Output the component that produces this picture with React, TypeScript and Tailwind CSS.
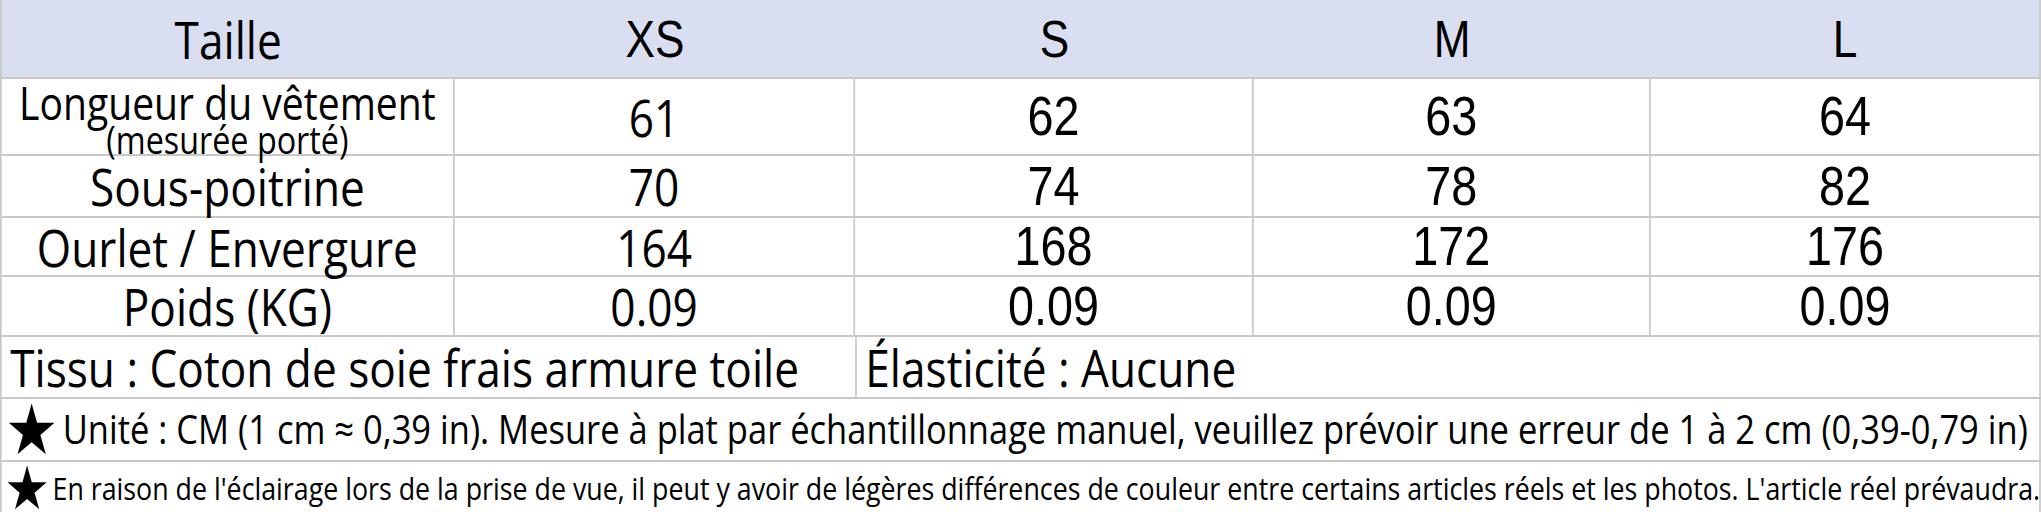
import React from 'react';

const OPEN = "font-['Open_Sans',sans-serif]";
const ARIAL = "font-['Liberation_Sans',Arial,sans-serif]";
const STAR = "font-['DejaVu_Sans',sans-serif]";

interface SizeRow {
  label: React.ReactNode;
  values: string[];
  height: string;
}

const sizeRows: SizeRow[] = [
  {
    label: (
      <div className="flex flex-col items-center leading-none">
        <span className="text-[46px] leading-[44px]">Longueur du vêtement</span>
        <span className="text-[38px] leading-[30px]">(mesurée porté)</span>
      </div>
    ),
    values: ['61', '62', '63', '64'],
    height: 'h-[77px]',
  },
  { label: 'Sous-poitrine', values: ['70', '74', '78', '82'], height: 'h-[62px]' },
  { label: 'Ourlet / Envergure', values: ['164', '168', '172', '176'], height: 'h-[59px]' },
  { label: 'Poids (KG)', values: ['0.09', '0.09', '0.09', '0.09'], height: 'h-[60px]' },
];

const colWidths = ['w-[533px]', 'w-[471px]', 'w-[469px]', 'w-[467px]', 'flex-1'];

const Cell: React.FC<{ width: string; last?: boolean; children: React.ReactNode; font: string; size?: string }> = ({
  width,
  last,
  children,
  font,
  size = 'text-[52px]',
}) => (
  <div
    className={`${width} ${font} ${size} h-full flex items-center justify-center leading-none border-l-2 border-[#c8c8c8] ${
      last ? 'border-r-2' : ''
    }`}
  >
    {children}
  </div>
);

export default function App() {
  return (
    <div className="w-[2041px] h-[512px] overflow-hidden bg-white text-black">
      <div className="w-[2401px] origin-top-left scale-x-[0.85]">
        {/* header */}
        <div className="flex h-[79px] bg-[#d9dff1] border-x-2 border-b-2 border-[#c8c8c8]">
          <div className={`${colWidths[0]} ${OPEN} text-[52px] leading-none flex items-center justify-center`}>Taille</div>
          {['XS', 'S', 'M', 'L'].map((s, i) => (
            <div
              key={s}
              className={`${colWidths[i + 1]} ${ARIAL} text-[52px] leading-none flex items-center justify-center`}
            >
              {s}
            </div>
          ))}
        </div>

        {sizeRows.map((row, r) => (
          <div key={r} className={`flex ${row.height} border-b-2 border-[#c8c8c8]`}>
            <Cell width={colWidths[0]} font={OPEN}>
              {row.label}
            </Cell>
            {row.values.map((v, i) => (
              <Cell
                key={i}
                width={colWidths[i + 1]}
                font={i === 0 ? OPEN : ARIAL}
                size={i === 0 ? 'text-[52px]' : 'text-[55px]'}
                last={i === 3}
              >
                {v}
              </Cell>
            ))}
          </div>
        ))}

        {/* fabric */}
        <div className={`flex h-[62px] border-x-2 border-b-2 border-[#c8c8c8] ${OPEN} text-[52px] leading-none`}>
          <div className="w-[1004px] flex items-center pl-[10px] whitespace-nowrap">Tissu : Coton de soie frais armure toile</div>
          <div className="flex-1 flex items-center pl-[10px] border-l-2 border-[#c8c8c8] whitespace-nowrap">
            Élasticité : Aucune
          </div>
        </div>

        {/* notes */}
        <div
          className={`flex items-center h-[63px] border-x-2 border-b-2 border-[#c8c8c8] pl-[4px] ${OPEN} text-[40.6px] leading-none whitespace-nowrap`}
        >
          <span className={`${STAR} text-[70px] leading-[56px] mr-[5px]`}>★</span>
          Unité : CM (1 cm ≈ 0,39 in). Mesure à plat par échantillonnage manuel, veuillez prévoir une erreur de 1 à 2 cm (0,39-0,79 in)
        </div>
        <div
          className={`flex items-center h-[52px] border-x-2 border-[#c8c8c8] pl-[3px] ${OPEN} text-[31.5px] leading-none whitespace-nowrap`}
        >
          <span className={`${STAR} text-[60px] leading-[46px] mr-[3px]`}>★</span>
          En raison de l'éclairage lors de la prise de vue, il peut y avoir de légères différences de couleur entre certains articles réels et les photos. L'article réel prévaudra.
        </div>
      </div>
    </div>
  );
}
